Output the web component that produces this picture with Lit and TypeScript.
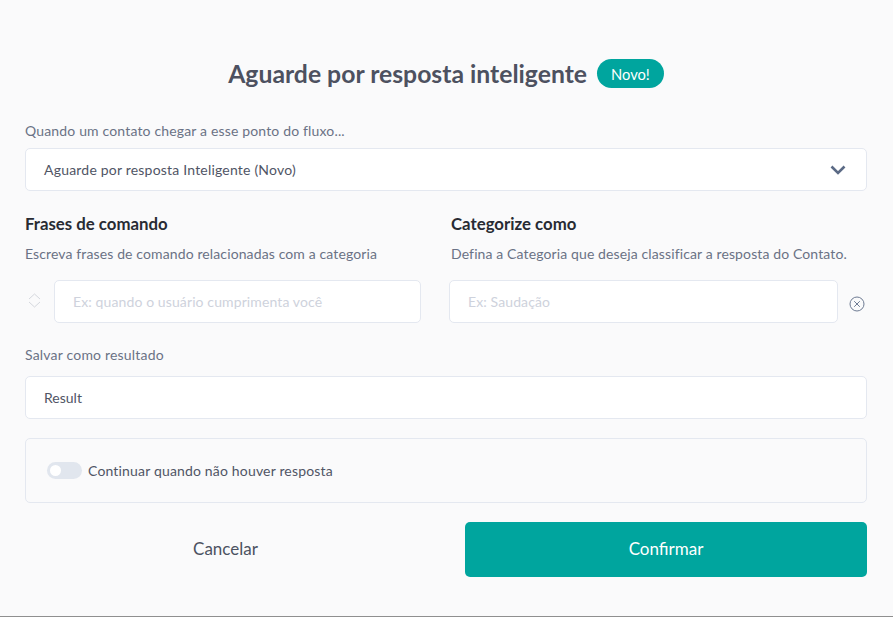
import { LitElement, html, css } from "lit";
import { customElement } from "lit/decorators.js";

@customElement("app-root")
export class AppRoot extends LitElement {
  static styles = css`
    :host {
      display: block;
      width: 893px;
      height: 617px;
      box-sizing: border-box;
      background: #fafafb;
      border-bottom: 1px solid #8f8f8f;
      font-family: Lato, "Liberation Sans", sans-serif;
      color: #505565;
      overflow: hidden;
    }
    .page {
      display: flex;
      flex-direction: column;
      padding: 59px 26px 0 25px;
    }
    .head {
      display: flex;
      justify-content: center;
      align-items: center;
      gap: 10px;
      height: 29px;
      margin-bottom: 34px;
    }
    h1 {
      margin: 0;
      font-size: 24.75px;
      line-height: 29px;
      font-weight: 700;
      color: #4d5160;
    }
    .badge {
      display: flex;
      align-items: center;
      height: 29px;
      padding: 0 14px;
      border-radius: 15px;
      background: #00a59e;
      color: #fff;
      font-size: 14.7px;
    }
    .label {
      font-size: 14px;
      line-height: 17px;
      letter-spacing: 0.12px;
      color: #6a7285;
    }
    .intro {
      letter-spacing: 0.16px;
    }
    .field {
      box-sizing: border-box;
      display: flex;
      align-items: center;
      height: 43px;
      padding: 0 18px;
      background: #fff;
      border: 1px solid #e4e8f0;
      border-radius: 5px;
      font-size: 14px;
      color: #505565;
    }
    .select {
      justify-content: space-between;
      margin-top: 9px;
      padding-right: 20px;
      letter-spacing: 0.2px;
    }
    .placeholder {
      color: #ced2dc;
      letter-spacing: 0.11px;
    }
    .cols {
      display: flex;
      margin-top: 23px;
    }
    .left {
      width: 396px;
      margin-right: 28px;
    }
    .right {
      flex: 1;
    }
    h2 {
      margin: 0 0 12px;
      font-size: 16.8px;
      line-height: 19px;
      font-weight: 700;
      color: #282b33;
    }
    .right h2 {
      margin-left: 2px;
    }
    .right .label {
      margin-left: 2px;
      white-space: nowrap;
    }
    .row {
      display: flex;
      align-items: center;
      margin-top: 18px;
    }
    .row .field {
      flex: 1;
    }
    .left .grip {
      flex: none;
      width: 29px;
      margin-bottom: 3px;
    }
    .remove {
      flex: none;
      width: 29px;
      box-sizing: border-box;
      padding-right: 2px;
      display: flex;
      justify-content: flex-end;
      margin-top: 5px;
    }
    .result-label {
      margin-top: 23px;
      letter-spacing: 0.19px;
    }
    .result {
      margin-top: 13px;
    }
    .panel {
      box-sizing: border-box;
      display: flex;
      align-items: center;
      gap: 6px;
      height: 65px;
      margin-top: 19px;
      padding-left: 21px;
      border: 1px solid #e4e8f0;
      border-radius: 5px;
      font-size: 14px;
      letter-spacing: 0.17px;
      color: #505565;
    }
    .toggle {
      display: flex;
      align-items: center;
      box-sizing: border-box;
      width: 35px;
      height: 17px;
      padding-left: 3px;
      border-radius: 9px;
      background: #e1e6ee;
    }
    .toggle i {
      display: block;
      width: 11px;
      height: 11px;
      border-radius: 50%;
      background: #fff;
    }
    .actions {
      display: flex;
      align-items: center;
      margin-top: 19px;
    }
    .cancel {
      width: 401px;
      margin-bottom: 3px;
      text-align: center;
      font-size: 17px;
      color: #4c5261;
    }
    .confirm {
      flex: 1;
      margin-left: 39px;
      display: flex;
      align-items: center;
      justify-content: center;
      box-sizing: border-box;
      height: 55px;
      padding-bottom: 2px;
      border-radius: 5px;
      background: #00a59e;
      color: #fff;
      font-size: 17px;
    }
    svg {
      display: block;
    }
  `;

  render() {
    return html`
      <div class="page">
        <div class="head">
          <h1>Aguarde por resposta inteligente</h1>
          <span class="badge">Novo!</span>
        </div>
        <div class="label intro">Quando um contato chegar a esse ponto do fluxo...</div>
        <div class="field select">
          <span>Aguarde por resposta Inteligente (Novo)</span>
          <svg width="16" height="10" viewBox="0 0 16 10" fill="none">
            <path d="M1.5 1.5 8 8l6.5-6.5" stroke="#5b6a85" stroke-width="2.6" />
          </svg>
        </div>
        <div class="cols">
          <div class="left">
            <h2>Frases de comando</h2>
            <div class="label">Escreva frases de comando relacionadas com a categoria</div>
            <div class="row">
              <div class="grip">
                <svg width="19" height="15" viewBox="0 0 19 15" fill="none">
                  <path d="M4 6 9.5 1 15 6M4 9 9.5 14 15 9" stroke="#d5d8de" stroke-width="1" />
                </svg>
              </div>
              <div class="field placeholder">Ex: quando o usuário cumprimenta você</div>
            </div>
          </div>
          <div class="right">
            <h2>Categorize como</h2>
            <div class="label">Defina a Categoria que deseja classificar a resposta do Contato.</div>
            <div class="row">
              <div class="field placeholder">Ex: Saudação</div>
              <div class="remove">
                <svg width="16" height="16" viewBox="0 0 16 16" fill="none" stroke="#6e7b93" stroke-width="1">
                  <circle cx="8" cy="8" r="7" />
                  <path d="M5.2 5.2l5.6 5.6M10.8 5.2l-5.6 5.6" />
                </svg>
              </div>
            </div>
          </div>
        </div>
        <div class="label result-label">Salvar como resultado</div>
        <div class="field result">Result</div>
        <div class="panel">
          <span class="toggle"><i></i></span>
          <span>Continuar quando não houver resposta</span>
        </div>
        <div class="actions">
          <div class="cancel">Cancelar</div>
          <div class="confirm">Confirmar</div>
        </div>
      </div>
    `;
  }
}
